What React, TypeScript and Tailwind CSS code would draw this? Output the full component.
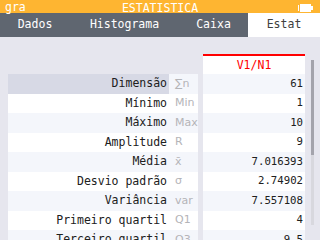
const rows = [
  { label: "Dimensão", sym: "∑n", value: "61" },
  { label: "Mínimo", sym: "Min", value: "1" },
  { label: "Máximo", sym: "Max", value: "10" },
  { label: "Amplitude", sym: "R", value: "9" },
  { label: "Média", sym: "x̄", value: "7.016393" },
  { label: "Desvio padrão", sym: "σ", value: "2.74902" },
  { label: "Variância", sym: "var", value: "7.557108" },
  { label: "Primeiro quartil", sym: "Q1", value: "4" },
  { label: "Terceiro quartil", sym: "Q3", value: "9.5" },
];

const tabs = [
  { name: "Dados", w: "w-[70px]" },
  { name: "Histograma", w: "w-[109px]" },
  { name: "Caixa", w: "w-[69px]" },
  { name: "Estat", w: "w-[72px]", active: true },
];

function Battery() {
  return (
    <svg width="15" height="8" viewBox="0 0 15 8" className="block">
      <rect x="0" y="1" width="1" height="6" fill="#fff" />
      <rect x="2" y="0" width="11" height="8" fill="#fff" />
      <rect x="13" y="2" width="2" height="4" fill="#fff" />
    </svg>
  );
}

export default function App() {
  return (
    <div className="flex h-[240px] w-[320px] flex-col overflow-hidden bg-[#e6e6ee] font-['DejaVu_Sans_Mono',monospace]">
      {/* title bar */}
      <div className="relative flex h-[13px] shrink-0 items-center bg-[#feb531] px-[5px] text-[11.5px] leading-none text-white">
        <span className="pt-[3px]">gra</span>
        <span className="absolute left-1/2 top-[3px] -translate-x-1/2">ESTATISTICA</span>
        <span className="ml-auto pr-[2px] pt-[2px]">
          <Battery />
        </span>
      </div>

      {/* tabs */}
      <div className="flex h-[24px] shrink-0 bg-[#5f6670] text-[11.5px]">
        {tabs.map((t) => (
          <div
            key={t.name}
            className={`${t.w} flex items-center justify-center ${
              t.active ? "bg-white text-[#404040]" : "text-white"
            }`}
          >
            {t.name}
          </div>
        ))}
      </div>

      {/* table */}
      <div className="relative flex-1 pl-[8px] pt-[17px]">
        <div className="flex">
          <div className="w-[161px]" />
          <div className="w-[29px]" />
          <div className="w-[5px]" />
          <div className="flex h-[20px] w-[102px] items-center justify-center border-t-2 border-[#ff0000] bg-white pt-[1px] text-[11.5px] text-[#ff0000]">
            V1/N1
          </div>
        </div>
        {rows.map((r, i) => {
          const alt = i % 2 === 0;
          const bg = alt ? "bg-[#f4f6fb]" : "bg-white";
          return (
            <div key={r.label} className="flex h-[19.5px]">
              <div
                className={`flex w-[161px] items-center justify-end pr-[2px] text-[11.5px] text-[#202020] ${
                  i === 0 ? "bg-[#d7d9e5]" : bg
                }`}
              >
                {r.label}
              </div>
              <div
                className={`flex w-[29px] items-center pl-[6px] font-['DejaVu_Sans',sans-serif] text-[11px] text-[#b4b4b8] ${bg}`}
              >
                {r.sym}
              </div>
              <div className="w-[5px]" />
              <div className={`flex w-[102px] items-center justify-end pr-[2px] text-[10.7px] text-[#202020] ${bg}`}>
                {r.value}
              </div>
            </div>
          );
        })}
        {/* scrollbar */}
        <div className="absolute left-[311px] top-[23px] h-[165px] w-[3px] bg-[#d8d8de]">
          <div className="h-[95px] w-full bg-[#a4a4ac]" />
        </div>
      </div>
    </div>
  );
}
